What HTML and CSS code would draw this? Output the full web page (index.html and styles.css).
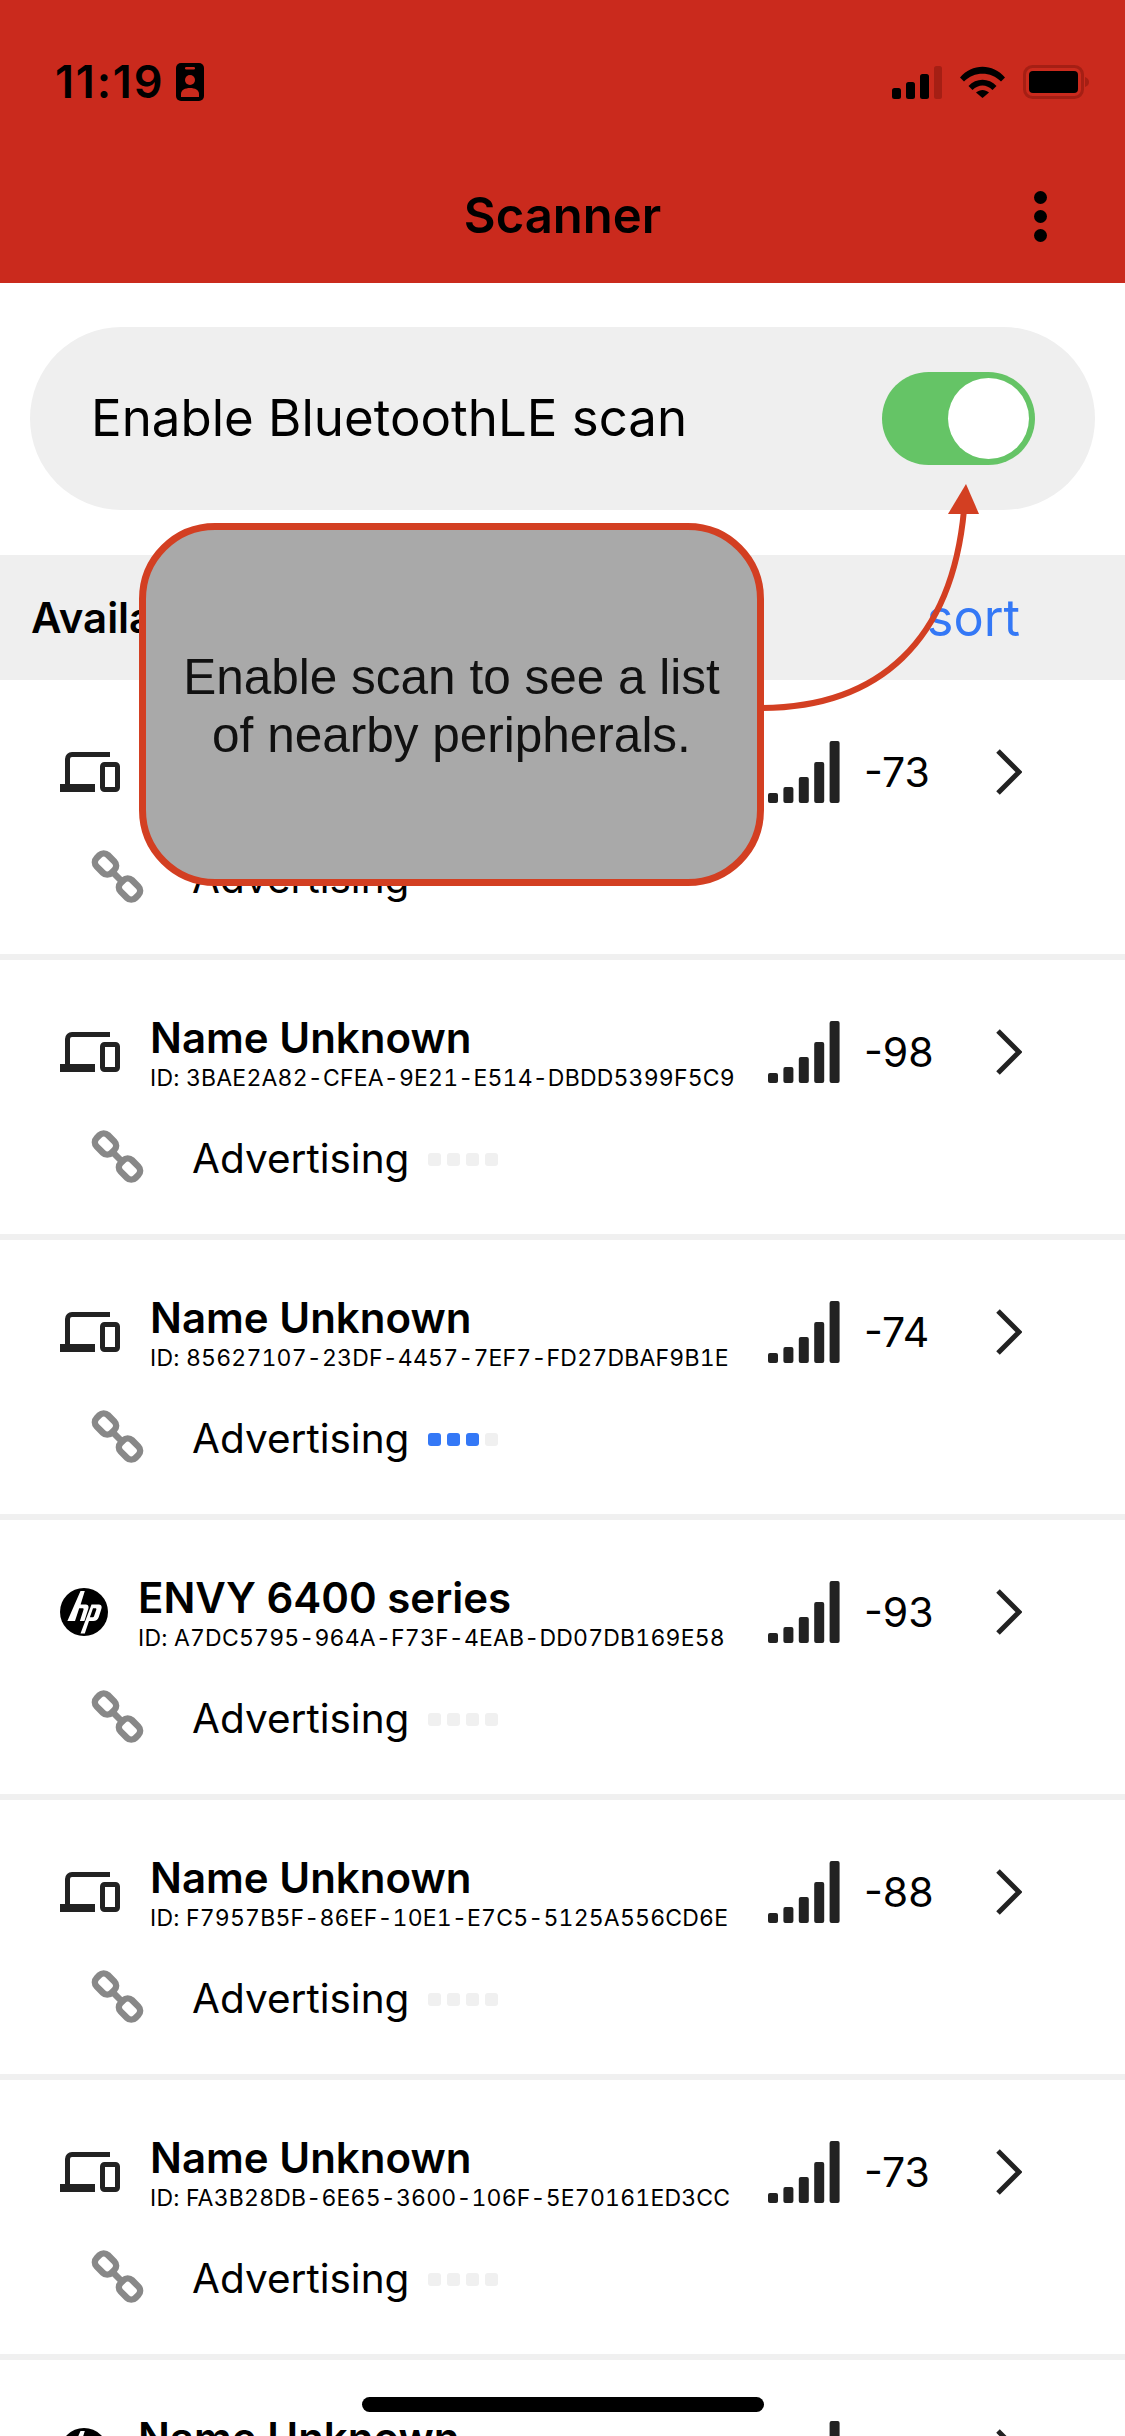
FILE: index.html
```html
<!DOCTYPE html>
<html lang="en">
<head>
<meta charset="utf-8">
<title>Scanner</title>
<link rel="stylesheet" href="styles.css">
</head>
<body>
<svg class="defs" width="0" height="0" aria-hidden="true">
  <symbol id="laptop" viewBox="0 0 60 40">
    <path d="M50 2.500H12a4.500 4.500 0 0 0-4.500 4.500V32" fill="none" stroke="#222" stroke-width="5"/>
    <rect x="0" y="32" width="35" height="8" fill="#222"/>
    <rect x="42.500" y="12.500" width="15" height="25" rx="2" fill="none" stroke="#222" stroke-width="5"/>
  </symbol>
  <symbol id="hp" viewBox="0 0 48 48">
    <circle cx="24" cy="24" r="24" fill="#000"/>
    <path fill="#fff" d="M20.500 3h4.300l-4.200 13.500h4.300c3 0 4.300 1.400 3.400 4.300l-3.900 12.200h-4.500l3.600-11.300c.3-1 0-1.500-1-1.500h-3.300l-4.200 12.800h-7.600z"/>
    <path fill="#fff" fill-rule="evenodd" d="M31.500 16.500h6.500c3 0 4.300 1.400 3.400 4.300l-2.600 8.200c-.9 2.800-2.700 4-5.500 4h-4.300l-4.200 12.500h-4.300zM33 20.200l-3.100 9.100h2.400c1 0 1.600-.5 1.900-1.500l2.100-6.100c.3-1 0-1.500-1-1.500z"/>
  </symbol>
  <symbol id="chain" viewBox="0 0 54 54">
    <g fill="none" stroke="#888" stroke-width="6.500">
      <rect x="4" y="6" width="21" height="16" rx="6" transform="rotate(45 14.500 14)"/>
      <rect x="28" y="31" width="21" height="16" rx="6" transform="rotate(45 38.500 39)"/>
      <path d="M20 20.500L33 33.500"/>
    </g>
  </symbol>
  <symbol id="bars" viewBox="0 0 72 62">
    <g fill="#222">
      <rect x="0" y="52" width="10" height="10" rx="2"/>
      <rect x="15.400" y="46" width="10" height="16" rx="2"/>
      <rect x="30.800" y="36" width="10" height="26" rx="2"/>
      <rect x="46.200" y="21" width="10" height="41" rx="2"/>
      <rect x="61.600" y="0" width="10" height="62" rx="2"/>
    </g>
  </symbol>
  <symbol id="chev" viewBox="0 0 26 46">
    <path d="M2 2L23 23L2 44" fill="none" stroke="#222" stroke-width="5"/>
  </symbol>
</svg>

<div class="page">
  <header class="header">
    <div class="status">
      <div class="status-left">
        <span class="time">11:19</span>
        <svg class="badge" viewBox="0 0 28 38">
          <rect width="28" height="38" rx="5" fill="#000"/>
          <rect x="9" y="4" width="10" height="2.500" rx="1.200" fill="#c92a1d"/>
          <circle cx="14" cy="17" r="5" fill="#c92a1d"/>
          <path d="M5 34v-3c0-4 4-6 9-6s9 2 9 6v3z" fill="#c92a1d"/>
        </svg>
      </div>
      <div class="status-right">
        <svg class="st-signal" viewBox="0 0 50 33">
          <rect x="0" y="22" width="9" height="11" rx="2.500"/>
          <rect x="14" y="16" width="9" height="17" rx="2.500"/>
          <rect x="28" y="8" width="9" height="25" rx="2.500"/>
          <rect x="42" y="0" width="8" height="33" rx="2.500" fill="#a51f14"/>
        </svg>
        <svg class="st-wifi" viewBox="0 0 45 32">
          <path d="M0 11.500C12 -3 33 -3 45 11.500L41 15.500C31 5 14 5 4 15.500z"/>
          <path d="M8.500 20C16 11.500 29 11.500 36.500 20L32.500 24C26.500 18 18.500 18 12.500 24z"/>
          <path d="M16 26.500C20 23 25 23 29 26.500L22.500 32z"/>
        </svg>
        <svg class="st-batt" viewBox="0 0 68 34">
          <rect x="1.500" y="1.500" width="58" height="31" rx="8" fill="none" stroke="#a51f14" stroke-width="3"/>
          <rect x="6" y="6" width="49" height="22" rx="4"/>
          <path d="M62 12c3 1 4 3 4 5s-1 4-4 5z" fill="#a51f14"/>
        </svg>
      </div>
    </div>
    <div class="nav">
      <h1 class="title">Scanner</h1>
      <div class="kebab"><i></i><i></i><i></i></div>
    </div>
  </header>

  <section class="scan-wrap">
    <div class="scan-card">
      <span class="scan-label">Enable BluetoothLE scan</span>
      <div class="toggle"><div class="knob"></div></div>
    </div>
  </section>

  <div class="section-bar">
    <span class="section-title">Available Peripherals</span>
    <span class="sort">sort</span>
  </div>

  <main class="list">
    <article class="row">
      <div class="row-main">
        <svg class="ico-laptop"><use href="#laptop"/></svg>
        <div class="names"><div class="name">Name Unknown</div><div class="id">ID: 5C0E71A4-2B6D-4F19-A3C8-09D7E2B46F11</div></div>
        <svg class="bars"><use href="#bars"/></svg><span class="rssi">-73</span><svg class="chev"><use href="#chev"/></svg>
      </div>
      <div class="row-sub">
        <svg class="chain"><use href="#chain"/></svg><span class="adv">Advertising</span>
        <span class="dots"><i></i><i></i><i></i><i></i></span>
      </div>
    </article>
    <article class="row">
      <div class="row-main">
        <svg class="ico-laptop"><use href="#laptop"/></svg>
        <div class="names"><div class="name">Name Unknown</div><div class="id">ID: 3BAE2A82-CFEA-9E21-E514-DBDD5399F5C9</div></div>
        <svg class="bars"><use href="#bars"/></svg><span class="rssi">-98</span><svg class="chev"><use href="#chev"/></svg>
      </div>
      <div class="row-sub">
        <svg class="chain"><use href="#chain"/></svg><span class="adv">Advertising</span>
        <span class="dots"><i></i><i></i><i></i><i></i></span>
      </div>
    </article>
    <article class="row">
      <div class="row-main">
        <svg class="ico-laptop"><use href="#laptop"/></svg>
        <div class="names"><div class="name">Name Unknown</div><div class="id">ID: 85627107-23DF-4457-7EF7-FD27DBAF9B1E</div></div>
        <svg class="bars"><use href="#bars"/></svg><span class="rssi">-74</span><svg class="chev"><use href="#chev"/></svg>
      </div>
      <div class="row-sub">
        <svg class="chain"><use href="#chain"/></svg><span class="adv">Advertising</span>
        <span class="dots"><i class="on"></i><i class="on"></i><i class="on"></i><i></i></span>
      </div>
    </article>
    <article class="row">
      <div class="row-main">
        <svg class="ico-hp"><use href="#hp"/></svg>
        <div class="names"><div class="name">ENVY 6400 series</div><div class="id">ID: A7DC5795-964A-F73F-4EAB-DD07DB169E58</div></div>
        <svg class="bars"><use href="#bars"/></svg><span class="rssi">-93</span><svg class="chev"><use href="#chev"/></svg>
      </div>
      <div class="row-sub">
        <svg class="chain"><use href="#chain"/></svg><span class="adv">Advertising</span>
        <span class="dots"><i></i><i></i><i></i><i></i></span>
      </div>
    </article>
    <article class="row">
      <div class="row-main">
        <svg class="ico-laptop"><use href="#laptop"/></svg>
        <div class="names"><div class="name">Name Unknown</div><div class="id">ID: F7957B5F-86EF-10E1-E7C5-5125A556CD6E</div></div>
        <svg class="bars"><use href="#bars"/></svg><span class="rssi">-88</span><svg class="chev"><use href="#chev"/></svg>
      </div>
      <div class="row-sub">
        <svg class="chain"><use href="#chain"/></svg><span class="adv">Advertising</span>
        <span class="dots"><i></i><i></i><i></i><i></i></span>
      </div>
    </article>
    <article class="row">
      <div class="row-main">
        <svg class="ico-laptop"><use href="#laptop"/></svg>
        <div class="names"><div class="name">Name Unknown</div><div class="id">ID: FA3B28DB-6E65-3600-106F-5E70161ED3CC</div></div>
        <svg class="bars"><use href="#bars"/></svg><span class="rssi">-73</span><svg class="chev"><use href="#chev"/></svg>
      </div>
      <div class="row-sub">
        <svg class="chain"><use href="#chain"/></svg><span class="adv">Advertising</span>
        <span class="dots"><i></i><i></i><i></i><i></i></span>
      </div>
    </article>
    <article class="row">
      <div class="row-main">
        <svg class="ico-hp"><use href="#hp"/></svg>
        <div class="names"><div class="name">Name Unknown</div><div class="id">ID: 1D4C7A90-52BE-4E07-8F36-7AC1B05E92D3</div></div>
        <svg class="bars"><use href="#bars"/></svg><span class="rssi">-81</span><svg class="chev"><use href="#chev"/></svg>
      </div>
    </article>
  </main>

  <svg class="arrow" viewBox="0 0 1125 2436" aria-hidden="true">
    <path d="M760 708C880 708 952 640 964 510" fill="none" stroke="#d33f22" stroke-width="6"/>
    <path d="M966 484L979 514L948 514z" fill="#d33f22"/>
  </svg>
  <div class="bubble">Enable scan to see a list<br>of nearby peripherals.</div>
  <div class="home"></div>
</div>
</body>
</html>
```

FILE: styles.css
```css
* { box-sizing: border-box; }
html, body { margin: 0; padding: 0; background: #fff; }
.defs { position: absolute; }
.page {
  position: relative;
  width: 1125px;
  height: 2436px;
  overflow: hidden;
  font-family: Inter, "Liberation Sans", sans-serif;
  color: #000;
}

/* header */
.header { height: 283px; background: #ca2a1d; padding-top: 63px; }
.status { display: flex; justify-content: space-between; height: 38px; padding: 0 34px 0 55px; }
.status-left { display: flex; align-items: center; gap: 12px; }
.time { font-size: 45px; font-weight: 600; line-height: 38px; letter-spacing: 1.8px; }
.badge { width: 28px; height: 38px; }
.status-right { display: flex; align-items: center; gap: 18px; }
.st-signal { width: 50px; height: 33px; }
.st-wifi { width: 45px; height: 32px; }
.st-batt { width: 68px; height: 34px; }
.nav { position: relative; display: flex; justify-content: center; align-items: center; height: 134px; margin-top: 48px; }
.title { margin: 0; font-size: 49px; font-weight: 600; line-height: 56px; }
.kebab { position: absolute; right: 78px; top: 42px; display: flex; flex-direction: column; gap: 6px; }
.kebab i { display: block; width: 13px; height: 13px; border-radius: 50%; background: #000; }

/* scan card */
.scan-wrap { padding: 44px 30px 45px; }
.scan-card {
  display: flex;
  align-items: center;
  justify-content: space-between;
  height: 183px;
  padding: 0 60px 0 61px;
  background: #efefef;
  border-radius: 92px;
}
.scan-label { font-size: 51px; line-height: 60px; margin-bottom: 2px; }
.toggle { position: relative; width: 153px; height: 93px; border-radius: 47px; background: #65c466; }
.knob { position: absolute; right: 6px; top: 6px; width: 81px; height: 81px; border-radius: 50%; background: #fff; }

/* section */
.section-bar {
  display: flex;
  align-items: center;
  justify-content: space-between;
  height: 125px;
  padding: 0 105px 0 31px;
  background: #efefef;
}
.section-title { font-size: 42px; font-weight: 600; }
.sort { font-size: 50.500px; color: #3478f6; }

/* rows */
.row { height: 280px; padding-top: 61px; border-bottom: 6px solid #f0f0f0; }
.row-main { display: flex; align-items: center; height: 62px; padding-left: 60px; }
.ico-laptop { width: 60px; height: 40px; margin-right: 30px; flex: none; }
.ico-hp { width: 48px; height: 48px; margin-right: 30px; flex: none; }
.names { flex: 1; min-width: 0; margin-top: 2px; }
.name { font-size: 42px; font-weight: 600; line-height: 46px; white-space: nowrap; }
.id { margin-top: 3px; font-size: 23px; line-height: 28px; letter-spacing: 0.2px; white-space: nowrap; font-variant-numeric: tabular-nums; }
.bars { width: 72px; height: 62px; flex: none; }
.rssi { width: 156px; padding-left: 24px; font-size: 41px; line-height: 48px; flex: none; }
.chev { width: 26px; height: 46px; margin-right: 103px; flex: none; }
.row-sub { display: flex; align-items: center; height: 54px; margin-top: 47px; padding-left: 91px; }
.chain { width: 54px; height: 54px; flex: none; }
.adv { margin-left: 47px; margin-top: 3px; font-size: 40.500px; line-height: 48px; }
.dots { display: flex; gap: 6px; margin: 4px 0 0 19px; }
.dots i { display: block; width: 13px; height: 13px; border-radius: 3px; background: #f0f0f0; }
.dots i.on { background: #3478f6; }

/* overlays */
.arrow { position: absolute; left: 0; top: 0; width: 1125px; height: 2436px; pointer-events: none; }
.bubble {
  position: absolute;
  left: 139px;
  top: 523px;
  width: 625px;
  height: 363px;
  display: flex;
  align-items: center;
  justify-content: center;
  text-align: center;
  padding-top: 2px;
  background: #a9a9a9;
  border: 7px solid #d33f22;
  border-radius: 76px;
  font-family: "Liberation Sans", Arial, sans-serif;
  font-size: 49.500px;
  line-height: 58px;
  color: #111;
}
.home { position: absolute; left: 362px; top: 2397px; width: 402px; height: 15px; border-radius: 8px; background: #000; }
```
